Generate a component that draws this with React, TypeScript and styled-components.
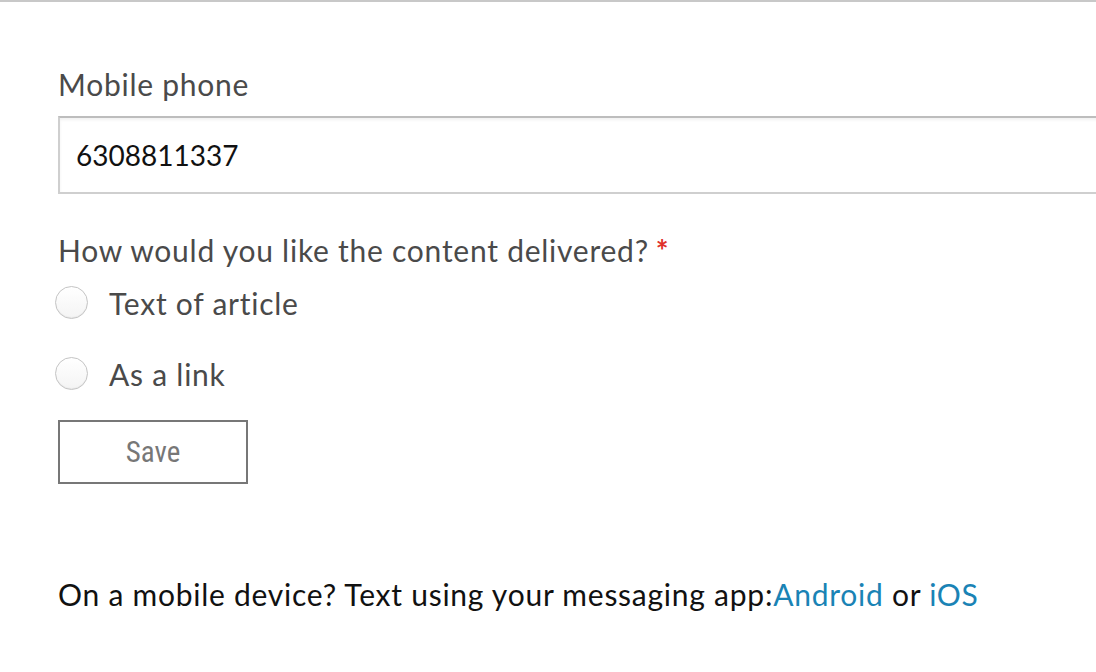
import React from "react";
import styled, { createGlobalStyle } from "styled-components";

const Global = createGlobalStyle`
  html, body { margin: 0; padding: 0; background: #fff; overflow: hidden; }
  body { font-family: "Lato", "Noto Sans", sans-serif; }
`;

const Page = styled.div`
  width: 1096px;
  height: 672px;
  border-top: 2px solid #c8c8c8;
  box-sizing: border-box;
  padding: 0 0 0 58px;
  overflow: hidden;
  font-size: 30px;
  letter-spacing: 0.75px;
`;

const Field = styled.div`
  display: flex;
  flex-direction: column;
  margin-top: 64px;
`;

const Label = styled.label`
  line-height: 36px;
  color: #4a4a4a;
`;

const Input = styled.input`
  box-sizing: border-box;
  width: 1100px;
  height: 78px;
  margin-top: 14px;
  padding: 0 16px;
  border: 2px solid #cfcfcf;
  border-top-color: #bdbdbd;
  box-shadow: inset 0 2px 3px rgba(0, 0, 0, 0.06);
  font-family: "Lato", "Noto Sans", sans-serif;
  font-size: 28px;
  letter-spacing: 0;
  color: #111;
  outline: none;
`;

const Question = styled.div`
  margin-top: 38px;
  line-height: 36px;
  color: #4a4a4a;
`;

const Star = styled.span`
  color: #e0302a;
  font-weight: 700;
  margin-left: 7px;
`;

const Options = styled.div`
  display: flex;
  flex-direction: column;
  gap: 38px;
  margin-top: 18px;
`;

const Option = styled.label`
  display: flex;
  align-items: center;
  gap: 21px;
  line-height: 32px;
  color: #4a4a4a;
  margin-left: -3px;
`;

const Radio = styled.span`
  width: 33px;
  height: 33px;
  border-radius: 50%;
  box-sizing: border-box;
  border: 1.5px solid #c4c4c4;
  background: linear-gradient(#ffffff, #f4f4f4);
  box-shadow: inset 0 -1px 1px rgba(0, 0, 0, 0.05);
`;

const SaveButton = styled.button`
  box-sizing: border-box;
  width: 190px;
  height: 64px;
  margin-top: 30px;
  border: 2px solid #777;
  background: #fff;
  color: #777;
  font-family: "Liberation Sans Narrow", "Roboto Condensed", "Liberation Sans", sans-serif;
  font-size: 29px;
  padding: 0;
`;

const Footer = styled.p`
  margin: 92px 0 0;
  line-height: 36px;
  color: #111;
`;

const Link = styled.a`
  color: #1a83b5;
  text-decoration: none;
`;

export default function App() {
  return (
    <>
      <Global />
      <Page>
        <Field>
          <Label>Mobile phone</Label>
          <Input defaultValue="6308811337" />
        </Field>
        <Question>
          How would you like the content delivered?<Star>*</Star>
        </Question>
        <Options>
          <Option>
            <Radio />
            Text of article
          </Option>
          <Option>
            <Radio />
            As a link
          </Option>
        </Options>
        <SaveButton>Save</SaveButton>
        <Footer>
          On a mobile device? Text using your messaging app:<Link href="#">Android</Link> or{" "}
          <Link href="#">iOS</Link>
        </Footer>
      </Page>
    </>
  );
}
